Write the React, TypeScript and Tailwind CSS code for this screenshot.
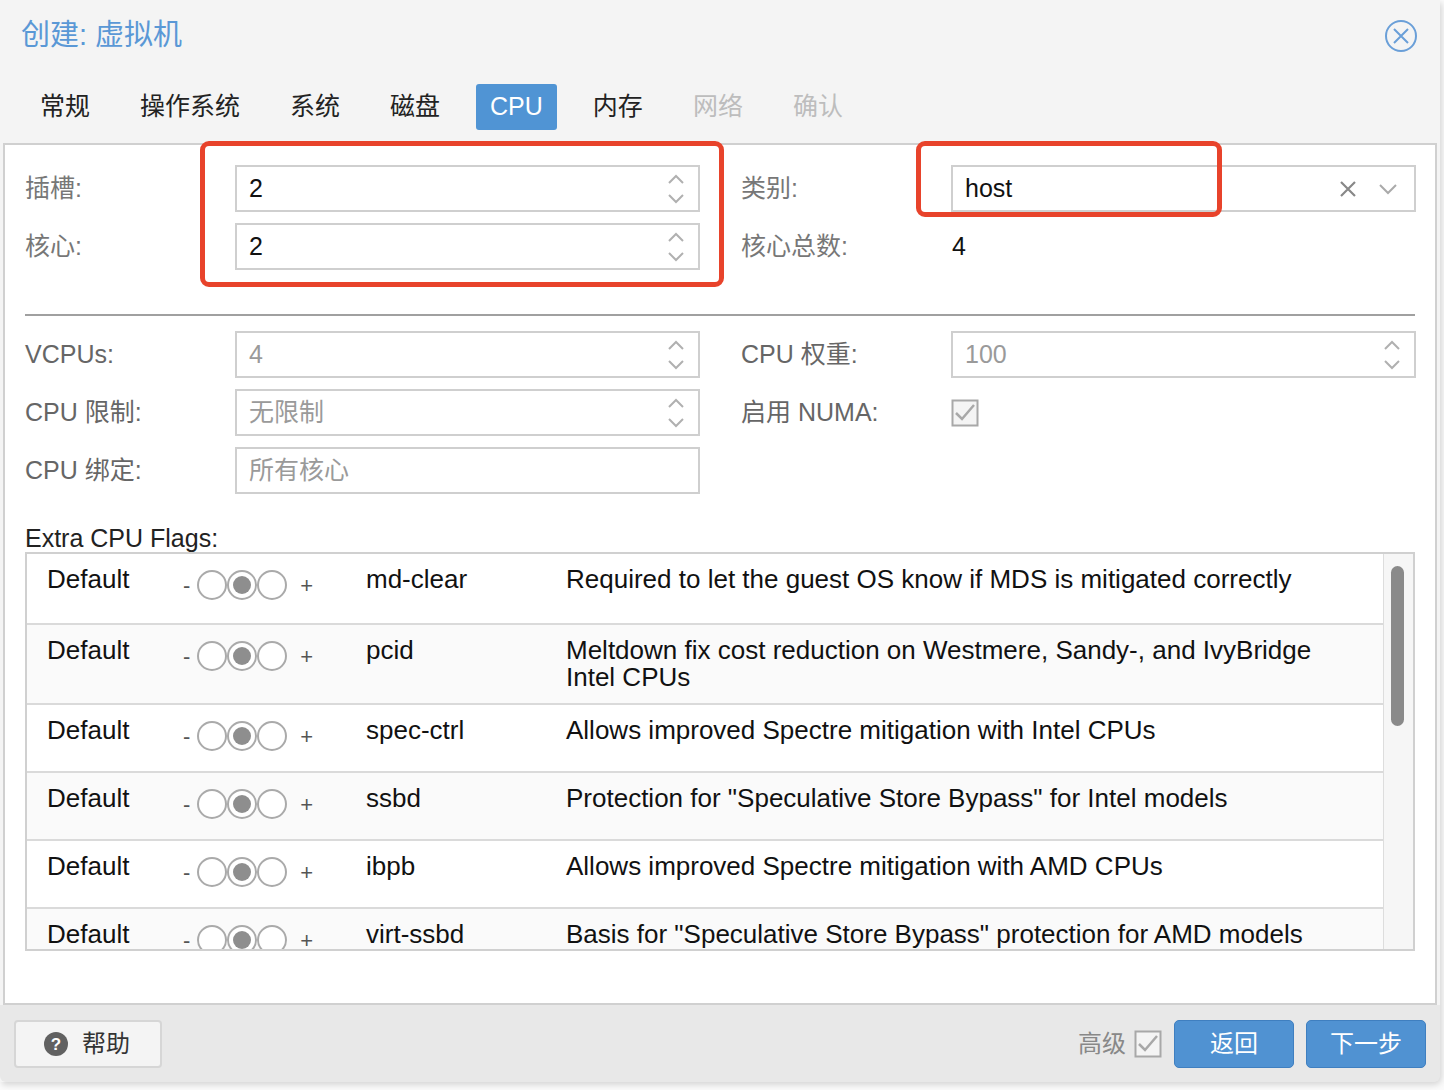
import React from "react";

const F = { fontFamily: '"Liberation Sans", "Noto Sans CJK SC", sans-serif' };

function Spin() {
  return (
    <svg width="20" height="34" viewBox="0 0 20 34" className="shrink-0">
      <path d="M3 11 L10 4 L17 11" fill="none" stroke="#b0b0b0" strokeWidth="2" />
      <path d="M3 23 L10 30 L17 23" fill="none" stroke="#b0b0b0" strokeWidth="2" />
    </svg>
  );
}

function Field({ value, dim, spin = true }: { value: string; dim?: boolean; spin?: boolean }) {
  return (
    <div className="h-[47px] border-2 border-[#cfcfcf] bg-white flex items-center pl-[12px] pr-[12px]">
      <span className={`flex-1 text-[25px] ${dim ? "text-[#9a9a9a]" : "text-[#111]"}`}>{value}</span>
      {spin && <Spin />}
    </div>
  );
}

function Check() {
  return (
    <svg width="28" height="28" viewBox="0 0 28 28">
      <rect x="1.5" y="1.5" width="25" height="25" fill="#f4f4f4" stroke="#a8a8a8" strokeWidth="2" />
      <path d="M5 14 L11 20 L23 6" fill="none" stroke="#a8a8a8" strokeWidth="2.5" />
    </svg>
  );
}

function Tri() {
  return (
    <div className="flex items-center text-[#555] text-[22px] mt-[6px]">
      <span className="mr-[6px]">-</span>
      <svg width="94" height="34" viewBox="0 0 94 34">
        <circle cx="16" cy="17" r="14" fill="#fff" stroke="#aaa" strokeWidth="2" />
        <circle cx="76" cy="17" r="14" fill="#fff" stroke="#aaa" strokeWidth="2" />
        <circle cx="46" cy="17" r="14" fill="#fff" stroke="#aaa" strokeWidth="2" />
        <circle cx="46" cy="17" r="9" fill="#8e8e8e" />
      </svg>
      <span className="ml-[10px]">+</span>
    </div>
  );
}

const flags = [
  ["md-clear", "Required to let the guest OS know if MDS is mitigated correctly", 71],
  ["pcid", "Meltdown fix cost reduction on Westmere, Sandy-, and IvyBridge Intel CPUs", 80],
  ["spec-ctrl", "Allows improved Spectre mitigation with Intel CPUs", 68],
  ["ssbd", "Protection for \"Speculative Store Bypass\" for Intel models", 68],
  ["ibpb", "Allows improved Spectre mitigation with AMD CPUs", 68],
  ["virt-ssbd", "Basis for \"Speculative Store Bypass\" protection for AMD models", 68],
] as const;

export default function App() {
  const tabs = ["常规", "操作系统", "系统", "磁盘", "CPU", "内存", "网络", "确认"];
  return (
    <div style={F} className="w-[1444px] h-[1090px] bg-[#fbfbfb] overflow-hidden">
      <div className="w-[1440px] h-[1082px] bg-[#f4f4f4] rounded-br-[8px] shadow-[2px_3px_6px_rgba(0,0,0,0.15)] flex flex-col">
        <div className="h-[72px] flex items-center pl-[21px] pr-[22px]">
          <span className="flex-1 text-[29px] text-[#5a98d6]">创建: 虚拟机</span>
          <svg width="34" height="34" viewBox="0 0 34 34">
            <circle cx="17" cy="17" r="15" fill="none" stroke="#6a9fd8" strokeWidth="2" />
            <path d="M10 10 L24 24 M24 10 L10 24" stroke="#6a9fd8" strokeWidth="2" />
          </svg>
        </div>
        <div className="h-[71px] flex items-start pt-[12px] pl-[20px]">
          {tabs.map((t, i) => (
            <div
              key={t}
              className={`h-[46px] mr-[10px] flex items-center text-[25px] rounded-[3px] ${
                t === "CPU" ? "bg-[#5094d4] text-white px-[14px] ml-[6px] mr-[16px]" : i >= 6 ? "text-[#bdbdbd] px-[20px]" : "text-[#222] px-[20px]"
              }`}
            >
              {t}
            </div>
          ))}
        </div>
        <div className="relative mx-[3px] h-[862px] bg-white border-2 border-[#d0d0d0] px-[20px] pt-[20px] text-[25px]">
          <div className="absolute left-[195px] top-[-4px] w-[524px] h-[146px] border-[5px] border-[#e8432b] rounded-[9px]" />
          <div className="absolute left-[911px] top-[-4px] w-[306px] h-[76px] border-[5px] border-[#e8432b] rounded-[9px] z-10" />
          <div className="grid grid-cols-[210px_465px_41px_210px_465px] gap-y-[11px] items-center">
            <span className="text-[#777]">插槽:</span>
            <Field value="2" />
            <span />
            <span className="text-[#777]">类别:</span>
            <div className="h-[47px] border-2 border-[#cfcfcf] bg-white flex items-center pl-[12px] pr-[16px] gap-[20px]">
              <span className="flex-1 text-[#111]">host</span>
              <svg width="20" height="20" viewBox="0 0 20 20"><path d="M3 3 L17 17 M17 3 L3 17" stroke="#888" strokeWidth="2.2" /></svg>
              <svg width="20" height="14" viewBox="0 0 20 14"><path d="M2 3 L10 11 L18 3" fill="none" stroke="#aaa" strokeWidth="2" /></svg>
            </div>
            <span className="text-[#777]">核心:</span>
            <Field value="2" />
            <span />
            <span className="text-[#777]">核心总数:</span>
            <span className="pl-[1px] text-[#111]">4</span>
          </div>
          <div className="h-[2px] bg-[#a0a0a0] mt-[44px] mb-[15px]" />
          <div className="grid grid-cols-[210px_465px_41px_210px_465px] gap-y-[11px] items-center">
            <span className="text-[#666]">VCPUs:</span>
            <Field value="4" dim />
            <span />
            <span className="text-[#666]">CPU 权重:</span>
            <Field value="100" dim />
            <span className="text-[#666]">CPU 限制:</span>
            <Field value="无限制" dim />
            <span />
            <span className="text-[#666]">启用 NUMA:</span>
            <Check />
            <span className="text-[#666]">CPU 绑定:</span>
            <Field value="所有核心" dim spin={false} />
          </div>
          <div className="mt-[30px] mb-[0px] text-[#222] leading-[28px]">Extra CPU Flags:</div>
          <div className="relative h-[399px] border-2 border-[#d0d0d0] overflow-hidden text-[26px]">
            <div className="absolute right-0 top-0 bottom-0 w-[30px] bg-[#f6f6f6] border-l border-[#ddd]">
              <div className="absolute left-[7px] top-[12px] w-[13px] h-[160px] rounded-full bg-[#8a8a8a]" />
            </div>
            {flags.map(([n, d, h], i) => (
              <div
                key={n}
                style={{ height: h }}
                className={`flex items-start pt-[12px] border-b-2 border-[#dadada] mr-[30px] text-[#111] leading-[27px] ${i % 2 ? "bg-[#fafafa]" : "bg-white"}`}
              >
                <span className="w-[156px] pl-[20px]">Default</span>
                <div className="w-[183px] -mt-[4px]"><Tri /></div>
                <span className="w-[200px]">{n}</span>
                <span className="flex-1 pr-[20px]">{d}</span>
              </div>
            ))}
          </div>
        </div>
        <div className="flex-1 bg-[#e8e8e8] flex items-center px-[14px] rounded-b-[6px]">
          <div className="w-[148px] h-[48px] rounded-[4px] border-2 border-[#d6d6d6] bg-[#f4f4f4] flex items-center pl-[28px] gap-[14px] text-[24px] text-[#333]">
            <svg width="24" height="24" viewBox="0 0 24 24">
              <circle cx="12" cy="12" r="12" fill="#616161" />
              <text x="12" y="18" textAnchor="middle" fontSize="17" fontWeight="bold" fill="#fff" fontFamily="Liberation Sans">?</text>
            </svg>
            帮助
          </div>
          <div className="flex-1" />
          <span className="text-[24px] text-[#888] mr-[8px]">高级</span>
          <Check />
          <div className="ml-[12px] w-[120px] h-[48px] rounded-[5px] bg-[#5092d2] border border-[#3f7fc0] text-white text-[24px] flex items-center justify-center">返回</div>
          <div className="ml-[12px] w-[120px] h-[48px] rounded-[5px] bg-[#5092d2] border border-[#3f7fc0] text-white text-[24px] flex items-center justify-center">下一步</div>
        </div>
      </div>
    </div>
  );
}
